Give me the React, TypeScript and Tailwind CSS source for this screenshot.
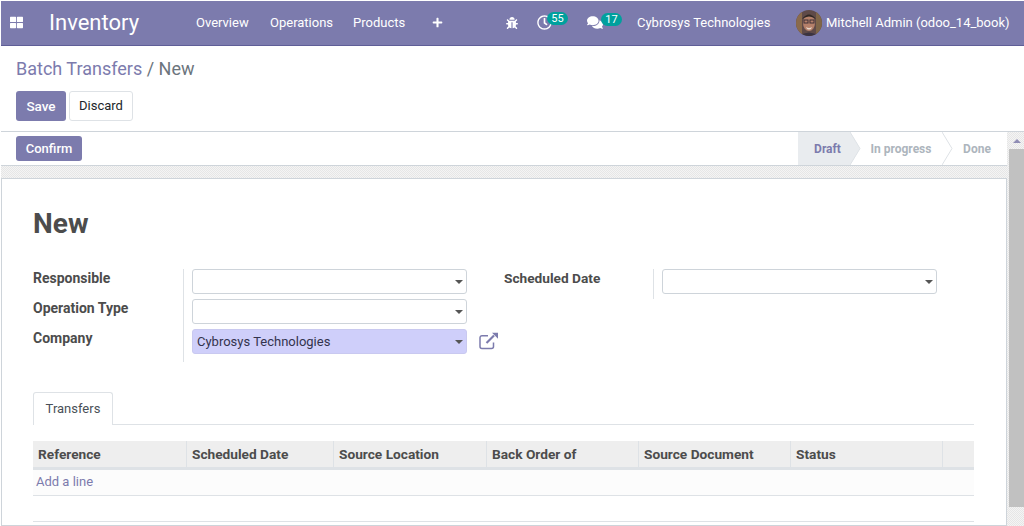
import { FaBug, FaComments, FaPlus, FaRegClock, FaThLarge } from "react-icons/fa";

const columns = [
  { label: "Reference", width: "w-[154px]" },
  { label: "Scheduled Date", width: "w-[147px]" },
  { label: "Source Location", width: "w-[153px]" },
  { label: "Back Order of", width: "w-[152px]" },
  { label: "Source Document", width: "w-[152px]" },
  { label: "Status", width: "w-[152px]" },
  { label: "", width: "flex-1" },
];

const Field = ({ value, highlight }: { value?: string; highlight?: boolean }) => (
  <div
    className={`flex h-[25px] w-[275px] items-center rounded-[3px] border pl-[4px] pr-[3px] text-[13px] ${
      highlight ? "border-[#c9c9f0] bg-[#cfcffa] text-[#33334d]" : "border-[#ced4da] bg-white"
    }`}
  >
    <span className="flex-1">{value}</span>
    <span className="mt-[1px] h-0 w-0 border-x-[4px] border-t-[4px] border-x-transparent border-t-[#555]" />
  </div>
);

const Avatar = () => (
  <svg width="26" height="26" viewBox="0 0 26 26" className="shrink-0">
    <defs>
      <clipPath id="avatar-clip">
        <circle cx="13" cy="13" r="13" />
      </clipPath>
    </defs>
    <g clipPath="url(#avatar-clip)">
      <rect width="26" height="26" fill="#5f4a48" />
      <rect x="0" y="0" width="6" height="26" fill="#8a6a4c" />
      <rect x="20" y="0" width="6" height="26" fill="#7f6548" />
      <ellipse cx="13" cy="13" rx="6" ry="8" fill="#b5806a" />
      <path d="M6 9 Q13 0 20 9 L18 8 Q13 5 8 8 Z" fill="#2f2724" />
      <rect x="8" y="10" width="4" height="3" fill="none" stroke="#3f3036" />
      <rect x="14" y="10" width="4" height="3" fill="none" stroke="#3f3036" />
      <path d="M10 17 Q13 19 16 17 L15 19 Q13 20 11 19 Z" fill="#e8d8cc" />
      <path d="M3 26 Q13 19 23 26 Z" fill="#3b3340" />
    </g>
  </svg>
);

const Chevron = ({ fill }: { fill: string }) => (
  <svg width="11" height="33" viewBox="0 0 11 33" className="absolute left-full top-0 z-10">
    <path d="M0 0 L10 16.5 L0 33 Z" fill={fill} />
    <path d="M0 0 L10 16.5 L0 33" fill="none" stroke="#dee2e6" />
  </svg>
);

const ExternalLink = () => (
  <svg width="20" height="18" viewBox="0 0 20 18" className="absolute left-[287px] top-[3px] text-[#7c7bad]">
    <path d="M9 3.7 H3 A2 2 0 0 0 1 5.7 V14.5 A2 2 0 0 0 3 16.5 H12.5 A2 2 0 0 0 14.5 14.5 V10.5" fill="none" stroke="currentColor" strokeWidth="1.5" />
    <path d="M7.5 11 L15 3.5" stroke="currentColor" strokeWidth="2.2" fill="none" />
    <path d="M13 0.7 H19 V6.7 Z" fill="currentColor" />
  </svg>
);

export default function App() {
  return (
    <div className="flex h-[526px] w-[1024px] flex-col overflow-hidden bg-white pl-px pt-px font-['Roboto','Liberation_Sans',sans-serif] text-[14px] text-[#4c4c4c]">
      <nav className="flex h-[45px] shrink-0 items-center whitespace-nowrap border-b border-[#5f5e97] bg-[#7c7bad] pb-[1px] text-[13px] text-white [&>*]:shrink-0">
        <FaThLarge className="ml-[9px] h-[13px] w-[13px]" />
        <span className="ml-[26px] w-[147px] text-[22px] leading-none">Inventory</span>
        <span className="w-[74px]">Overview</span>
        <span className="w-[83px]">Operations</span>
        <span className="w-[79px]">Products</span>
        <FaPlus className="h-[11px] w-[11px]" />
        <FaBug className="ml-[63px] h-[12px] w-[12px]" />
        <span className="relative ml-[19px]">
          <FaRegClock className="h-[15px] w-[15px]" />
          <span className="absolute left-[10px] top-[-3px] flex h-[13px] w-[21px] items-center justify-center rounded-full bg-[#00a09d] text-[11px] leading-none text-white">
            55
          </span>
        </span>
        <span className="relative ml-[35px]">
          <FaComments className="h-[15px] w-[16px]" />
          <span className="absolute left-[14px] top-[-2px] flex h-[13px] w-[21px] items-center justify-center rounded-full bg-[#00a09d] text-[11px] leading-none text-white">
            17
          </span>
        </span>
        <span className="ml-[34px] w-[134px]">Cybrosys Technologies</span>
        <span className="ml-[25px]">
          <Avatar />
        </span>
        <span className="ml-[4px]">Mitchell Admin (odoo_14_book)</span>
      </nav>

      <header className="h-[86px] shrink-0 border-b border-[#ced4da] pl-[15px]">
        <div className="pt-[12px] text-[18px] leading-[22px]">
          <span className="text-[#7c7bad]">Batch Transfers</span>
          <span className="text-[#6c757d]"> / New</span>
        </div>
        <div className="mt-[11px] flex gap-[3px]">
          <button className="h-[30px] w-[50px] rounded-[3px] bg-[#7c7bad] text-[13.5px] font-medium text-white">Save</button>
          <button className="h-[30px] w-[64px] rounded-[3px] border border-[#dee2e6] bg-white text-[13px] text-[#212529]">Discard</button>
        </div>
      </header>

      <div className="flex min-h-0 flex-1">
        <div className="flex min-w-0 flex-1 flex-col">
          <div className="flex h-[34px] shrink-0 items-center border-b border-[#ced4da] pl-[15px]">
            <button className="h-[25px] w-[66px] rounded-[3px] bg-[#7c7bad] text-[13px] font-medium text-white">Confirm</button>
            <div className="ml-auto flex h-full text-[12px] font-bold">
              <div className="relative flex w-[52px] items-center justify-center bg-[#e9ecef] pl-[7px] text-[#7c7bad]">
                Draft
                <Chevron fill="#e9ecef" />
              </div>
              <div className="relative flex w-[92px] items-center justify-center pl-[10px] text-[#adb5bd]">
                In progress
                <Chevron fill="#ffffff" />
              </div>
              <div className="flex w-[65px] items-center justify-center pl-[5px] text-[#adb5bd]">Done</div>
            </div>
          </div>

          <div className="flex-1 bg-[repeating-conic-gradient(#e6e6e6_0_25%,#f4f4f4_0_50%)] bg-size-[2px_2px] pt-[12px]">
            <div className="h-full border border-[#ced4da] bg-white pl-[31px] pr-[32px]">
              <h1 className="pt-[28px] text-[28px] font-bold leading-[33px] text-[#4c4c4c]">New</h1>

              <div className="mt-[29px] flex">
                <div className="grid w-[151px] grid-rows-[30px_30px_30px] border-r border-[#dee2e6] pb-[3px] font-bold">
                  <span className="leading-[18px]">Responsible</span>
                  <span className="leading-[18px]">Operation Type</span>
                  <span className="leading-[18px]">Company</span>
                </div>
                <div className="ml-[8px] flex flex-col gap-[5px]">
                  <Field />
                  <Field />
                  <div className="relative">
                    <Field value="Cybrosys Technologies" highlight />
                    <ExternalLink />
                  </div>
                </div>
                <div className="ml-[37px] flex h-[30px] w-[150px] border-r border-[#dee2e6] text-[13.7px] font-bold">
                  <span className="leading-[18px]">Scheduled Date</span>
                </div>
                <div className="ml-[8px]">
                  <Field />
                </div>
              </div>

              <div className="mt-[30px] flex h-[33px] border-b border-[#dee2e6]">
                <div className="h-[33px] w-[80px] rounded-t-[3px] border-x border-t border-[#dee2e6] bg-white pt-[6px] text-center text-[13px] text-[#495057]">
                  Transfers
                </div>
              </div>

              <div className="mt-[16px] flex h-[29px] border-b-[3px] border-[#dee2e6] bg-[#eeeeee] text-[13.7px] font-bold">
                {columns.map((c) => (
                  <div key={c.label} className={`${c.width} border-r border-[#dee2e6] pl-[5px] pt-[3px] last:border-r-0`}>
                    {c.label}
                  </div>
                ))}
              </div>
              <div className="h-[26px] border-b border-[#dee2e6] bg-[#fcfcfc] pl-[3px] pt-[2px] text-[13px] text-[#7c7bad]">Add a line</div>
              <div className="h-[26px] border-b border-[#dee2e6]" />
            </div>
          </div>
        </div>

        <div className="flex w-[17px] shrink-0 flex-col bg-[repeating-conic-gradient(#e6e6e6_0_25%,#f4f4f4_0_50%)] bg-size-[2px_2px] pl-[2px]">
          <div className="flex h-[17px] shrink-0 items-center justify-center">
            <span className="h-0 w-0 border-x-[4px] border-b-[4px] border-x-transparent border-b-[#8f8db5]" />
          </div>
          <div className="h-[358px] bg-[#c1c1c1]" />
        </div>
      </div>
    </div>
  );
}
